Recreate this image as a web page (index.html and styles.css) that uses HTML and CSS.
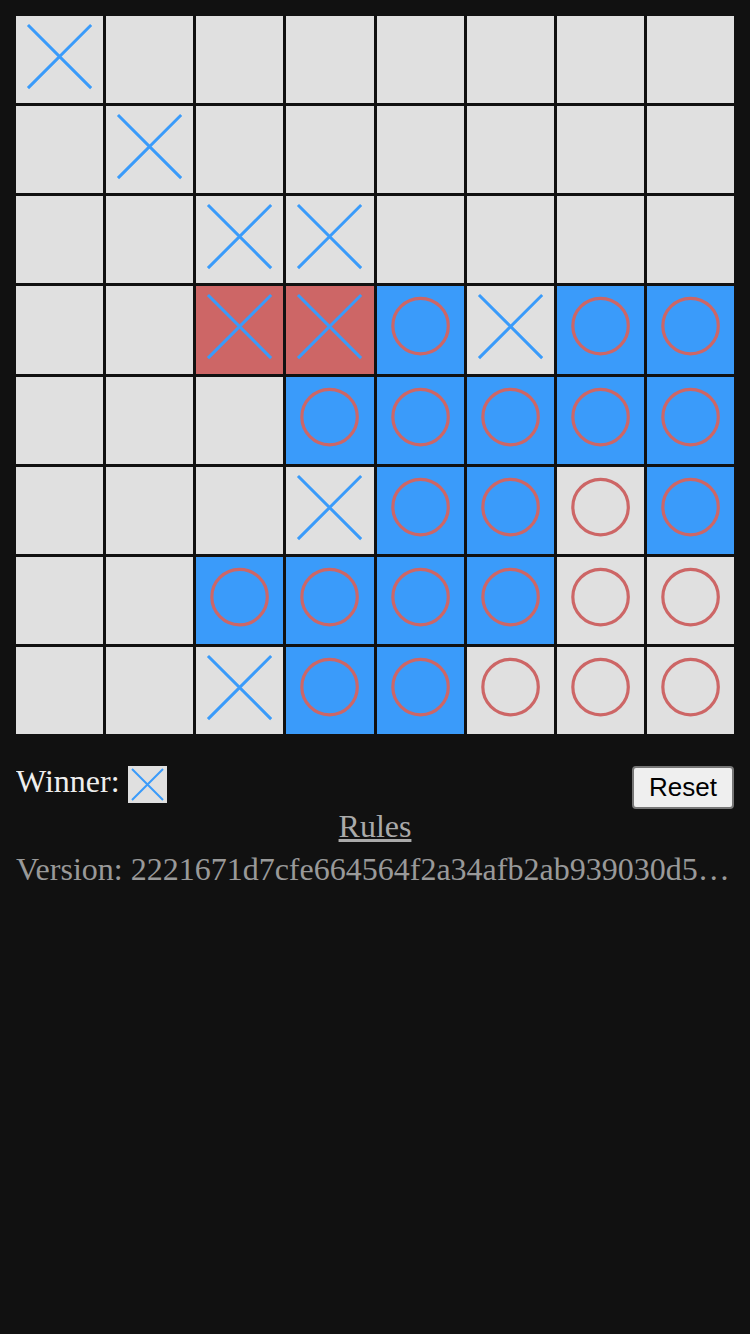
FILE: index.html
```html
<!DOCTYPE html>
<html>
<head>
<meta charset="utf-8">
<link rel="stylesheet" href="styles.css">
</head>
<body>
<svg class="defs" width="0" height="0" aria-hidden="true">
  <symbol id="x" viewBox="0 0 87 87">
    <path d="M13 10 L74 71 M74 10 L13 71" stroke="#3a9bfa" stroke-width="3" stroke-linecap="square" fill="none"/>
  </symbol>
  <symbol id="o" viewBox="0 0 87 87">
    <circle cx="43.5" cy="40" r="27.7" stroke="#cd6666" stroke-width="3.2" fill="none"/>
  </symbol>
</svg>
<div class="board">
  <div class="cell"><svg><use href="#x"/></svg></div>
  <div class="cell"></div><div class="cell"></div><div class="cell"></div><div class="cell"></div><div class="cell"></div><div class="cell"></div><div class="cell"></div>

  <div class="cell"></div>
  <div class="cell"><svg><use href="#x"/></svg></div>
  <div class="cell"></div><div class="cell"></div><div class="cell"></div><div class="cell"></div><div class="cell"></div><div class="cell"></div>

  <div class="cell"></div><div class="cell"></div>
  <div class="cell"><svg><use href="#x"/></svg></div>
  <div class="cell"><svg><use href="#x"/></svg></div>
  <div class="cell"></div><div class="cell"></div><div class="cell"></div><div class="cell"></div>

  <div class="cell"></div><div class="cell"></div>
  <div class="cell red"><svg><use href="#x"/></svg></div>
  <div class="cell red"><svg><use href="#x"/></svg></div>
  <div class="cell blue"><svg><use href="#o"/></svg></div>
  <div class="cell"><svg><use href="#x"/></svg></div>
  <div class="cell blue"><svg><use href="#o"/></svg></div>
  <div class="cell blue"><svg><use href="#o"/></svg></div>

  <div class="cell"></div><div class="cell"></div><div class="cell"></div>
  <div class="cell blue"><svg><use href="#o"/></svg></div>
  <div class="cell blue"><svg><use href="#o"/></svg></div>
  <div class="cell blue"><svg><use href="#o"/></svg></div>
  <div class="cell blue"><svg><use href="#o"/></svg></div>
  <div class="cell blue"><svg><use href="#o"/></svg></div>

  <div class="cell"></div><div class="cell"></div><div class="cell"></div>
  <div class="cell"><svg><use href="#x"/></svg></div>
  <div class="cell blue"><svg><use href="#o"/></svg></div>
  <div class="cell blue"><svg><use href="#o"/></svg></div>
  <div class="cell"><svg><use href="#o"/></svg></div>
  <div class="cell blue"><svg><use href="#o"/></svg></div>

  <div class="cell"></div><div class="cell"></div>
  <div class="cell blue"><svg><use href="#o"/></svg></div>
  <div class="cell blue"><svg><use href="#o"/></svg></div>
  <div class="cell blue"><svg><use href="#o"/></svg></div>
  <div class="cell blue"><svg><use href="#o"/></svg></div>
  <div class="cell"><svg><use href="#o"/></svg></div>
  <div class="cell"><svg><use href="#o"/></svg></div>

  <div class="cell"></div><div class="cell"></div>
  <div class="cell"><svg><use href="#x"/></svg></div>
  <div class="cell blue"><svg><use href="#o"/></svg></div>
  <div class="cell blue"><svg><use href="#o"/></svg></div>
  <div class="cell"><svg><use href="#o"/></svg></div>
  <div class="cell"><svg><use href="#o"/></svg></div>
  <div class="cell"><svg><use href="#o"/></svg></div>
</div>

<div class="controls">
  <div class="winner">Winner: <span class="winner-box"><svg viewBox="0 0 39 37"><path d="M4 3 L35 34 M35 3 L4 34" stroke="#3a9bfa" stroke-width="2" fill="none"/></svg></span></div>
  <button class="reset">Reset</button>
</div>
<div class="rules"><a href="#">Rules</a></div>
<div class="version">Version: 2221671d7cfe664564f2a34afb2ab939030d5c1a</div>
</body>
</html>
```
FILE: styles.css
```css
html, body {
  background: #111111;
}
body {
  margin: 16px;
  font-family: "Liberation Serif", "Times New Roman", serif;
  font-size: 32px;
  color: #eeeeee;
}
.defs {
  position: absolute;
  width: 0;
  height: 0;
}
.board {
  display: grid;
  grid-template-columns: repeat(8, 1fr);
  gap: 3px;
  width: 718px;
}
.cell {
  background: #e0e0e0;
  aspect-ratio: 1 / 1;
  display: flex;
}
.cell svg {
  width: 100%;
  height: 100%;
}
.cell.blue {
  background: #3a9bfa;
}
.cell.red {
  background: #cd6666;
}
.controls {
  display: flex;
  justify-content: space-between;
  align-items: flex-start;
  margin-top: 32px;
  height: 43px;
}
.winner {
  line-height: 37px;
  margin-top: -3px;
  display: flex;
  align-items: flex-start;
  gap: 8px;
}
.winner-box {
  display: block;
  width: 39px;
  height: 37px;
  margin-top: 3px;
  background: #e0e0e0;
}
.winner-box svg {
  display: block;
  width: 39px;
  height: 37px;
}
.reset {
  font-family: "Liberation Sans", Arial, sans-serif;
  font-size: 26px;
  height: 43px;
  width: 102px;
  padding: 0;
  background: #efefef;
  color: #000;
  border: 2px solid #767676;
  border-radius: 4px;
}
.rules {
  text-align: center;
  line-height: 43px;
  margin-top: -4px;
}
.rules a {
  color: #aaaaaa;
}
.version {
  color: #999999;
  line-height: 43px;
  white-space: nowrap;
  overflow: hidden;
  text-overflow: ellipsis;
  width: 718px;
}
```
